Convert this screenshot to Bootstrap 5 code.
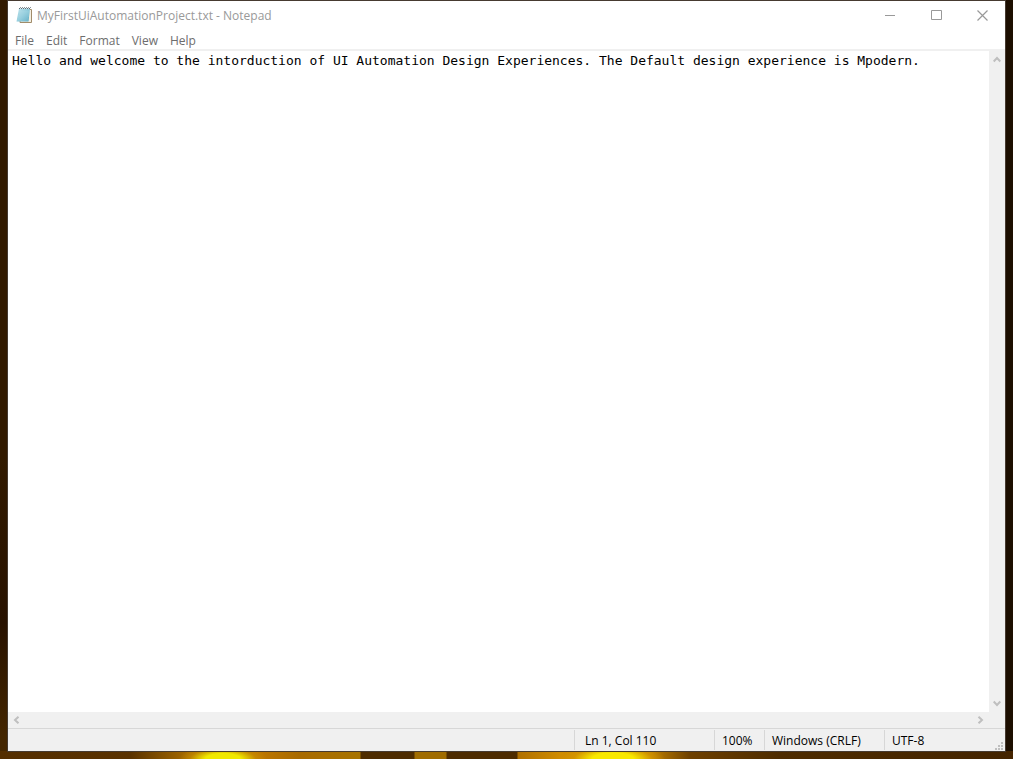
<!DOCTYPE html>
<html lang="en">
<head>
<meta charset="utf-8">
<meta name="viewport" content="width=device-width, initial-scale=1">
<title>MyFirstUiAutomationProject.txt - Notepad</title>
<link href="https://cdn.jsdelivr.net/npm/bootstrap@5.3.0/dist/css/bootstrap.min.css" rel="stylesheet">
<style>
  body {
    font: 12px/16px "Open Sans", "Noto Sans", sans-serif;
    color: #000;
    /* desktop wallpaper seen round the window */
    background:
      radial-gradient(ellipse 44px 14px at 223px 100%, #f0e800 40%, #c8900099 75%, transparent),
      radial-gradient(ellipse 52px 16px at 613px 100%, #f8e800 40%, #d89c0099 75%, transparent),
      linear-gradient(90deg, #542e00 0, #5a3200 130px, #a86c00 190px, #c07800 255px, #a86a00 300px, #a87400 360px, #4e2c00 361px, #4e2c00 414px, #a06c00 415px, #a06c00 446px, #4e2c00 447px, #4e2c00 517px, #b07000 518px, #d08c00 560px, #c08000 650px, #6e4000 690px, #4e2c00 780px, #442400 100%) bottom / 100% 8px no-repeat,
      linear-gradient(90deg, transparent 50%, #1c0e00 50%),
      linear-gradient(#321a00 0, #321a00 60%, #281200 82%, #442600 97%);
  }
  .desktop { padding: 0 7px 7px; }
  .app-window { border: 1px solid #463a30; background: #fff; }
  .title-bar { height: 30px; padding-left: 8px; color: #999; }
  .title-bar h1 { font-size: 12px; line-height: 16px; font-weight: 400; }
  .caption-btn { width: 46px; height: 28px; color: #999; }
  .plain-btn { border: 0; padding: 0; background: transparent; display: flex; align-items: center; justify-content: center; }
  .menu-bar { height: 18px; padding-left: 1px; }
  .menu-bar button { color: #6d6d6d; padding: 2px 6px 0; }
  .edit-row { border-top: 2px solid #f0f0f0; }
  .editor {
    border: 0; outline: 0; resize: none; overflow: hidden; white-space: pre;
    padding: 1px 4px 0; color: #000; background: #fff;
    font: 13px/18px "DejaVu Sans Mono", "Liberation Mono", monospace;
  }
  .scroll-v { width: 16px; background: #f0f0f0; }
  .scroll-h { height: 16px; padding-right: 17px; background: #f0f0f0; }
  .scroll-btn { width: 16px; height: 16px; color: #bfbfbf; }
  .scroll-v .scroll-btn:last-child { height: 18px; }
  .scroll-h .scroll-btn { height: 15px; }
  .status-bar { height: 23px; background: #f0f0f0; border-top: 1px solid #d7d7d7; padding: 1px 0; }
  .status-cell { border-left: 1px solid #d7d7d7; padding: 3px 0 0 7px; }
  .cell-pos { width: 140px; padding-left: 10px; }
  .cell-zoom { width: 50px; }
  .cell-eol { width: 120px; }
  .cell-enc { width: 121px; padding-right: 2px; }
</style>
</head>
<body>
<div class="desktop d-flex vh-100">
  <main class="app-window d-flex flex-column flex-grow-1">
    <header class="title-bar d-flex flex-shrink-0">
      <svg class="align-self-center" width="17" height="18" viewBox="0 0 17 18" aria-hidden="true">
        <defs><linearGradient id="page" x1="0" y1="0" x2="1" y2="1"><stop offset="0" stop-color="#c4e6ee"/><stop offset=".5" stop-color="#8fcbdb"/><stop offset="1" stop-color="#4da3bd"/></linearGradient></defs>
        <path d="M5 2.500H15.500V15.500H4Z" fill="#f4efe2" stroke="#a18c6a"/>
        <path d="M3 1.500H14L12.500 14.500H.5Z" fill="url(#page)"/>
        <path d="M3 5H13M3 7H13M2 9H13M2 11H12M1 13H12" stroke="#b4dfe9" stroke-width=".5"/>
        <path d="M3 1.500H15" stroke="#5d6b75" stroke-dasharray="1 1"/>
        <path d="M4 .5H15" stroke="#8d9599" stroke-dasharray="1 1"/>
      </svg>
      <h1 class="mb-0 ms-1 flex-grow-1 text-nowrap align-self-center">MyFirstUiAutomationProject.txt - Notepad</h1>
      <button type="button" class="plain-btn caption-btn" aria-label="Minimize"><svg width="10" height="11"><path d="M0 5.500H10" stroke="currentColor"/></svg></button>
      <button type="button" class="plain-btn caption-btn" aria-label="Maximize"><svg width="11" height="11"><path d="M.5 .5H10.500V9.500H.5Z" fill="none" stroke="currentColor"/></svg></button>
      <button type="button" class="plain-btn caption-btn" aria-label="Close"><svg width="11" height="11"><path d="M.5 .5L10.500 10.500M10.500 .5L.5 10.500" stroke="currentColor" stroke-width="1.200"/></svg></button>
    </header>
    <nav class="menu-bar d-flex flex-shrink-0" aria-label="Menu">
      <button type="button" class="plain-btn">File</button>
      <button type="button" class="plain-btn">Edit</button>
      <button type="button" class="plain-btn">Format</button>
      <button type="button" class="plain-btn">View</button>
      <button type="button" class="plain-btn">Help</button>
    </nav>
    <div class="edit-row d-flex flex-grow-1">
      <textarea class="editor flex-grow-1" aria-label="Text editor" spellcheck="false">Hello and welcome to the intorduction of UI Automation Design Experiences. The Default design experience is Mpodern.</textarea>
      <div class="scroll-v d-flex flex-column justify-content-between">
        <button type="button" class="plain-btn scroll-btn" aria-label="Scroll up"><svg width="8" height="7"><path d="M.7 5.500L4 2L7.300 5.500" fill="none" stroke="currentColor" stroke-width="2"/></svg></button>
        <button type="button" class="plain-btn scroll-btn" aria-label="Scroll down"><svg width="8" height="7"><path d="M.7 1.500L4 5L7.300 1.500" fill="none" stroke="currentColor" stroke-width="2"/></svg></button>
      </div>
    </div>
    <div class="scroll-h d-flex justify-content-between flex-shrink-0">
      <button type="button" class="plain-btn scroll-btn" aria-label="Scroll left"><svg width="7" height="8"><path d="M5.500 .7L2 4L5.500 7.300" fill="none" stroke="currentColor" stroke-width="2"/></svg></button>
      <button type="button" class="plain-btn scroll-btn" aria-label="Scroll right"><svg width="7" height="8"><path d="M1.500 .7L5 4L1.500 7.300" fill="none" stroke="currentColor" stroke-width="2"/></svg></button>
    </div>
    <footer class="status-bar d-flex justify-content-end flex-shrink-0 text-nowrap">
      <div class="status-cell cell-pos">Ln 1, Col 110</div>
      <div class="status-cell cell-zoom">100%</div>
      <div class="status-cell cell-eol">Windows (CRLF)</div>
      <div class="status-cell cell-enc d-flex justify-content-between">UTF-8
        <svg class="align-self-end" width="8" height="8" fill="#bfbfbf" aria-hidden="true"><path d="M6 0h2v2h-2zM3 3h2v2h-2zM6 3h2v2h-2zM0 6h2v2h-2zM3 6h2v2h-2zM6 6h2v2h-2z"/></svg>
      </div>
    </footer>
  </main>
</div>
<script src="https://cdn.jsdelivr.net/npm/bootstrap@5.3.0/dist/js/bootstrap.bundle.min.js"></script>
</body>
</html>
